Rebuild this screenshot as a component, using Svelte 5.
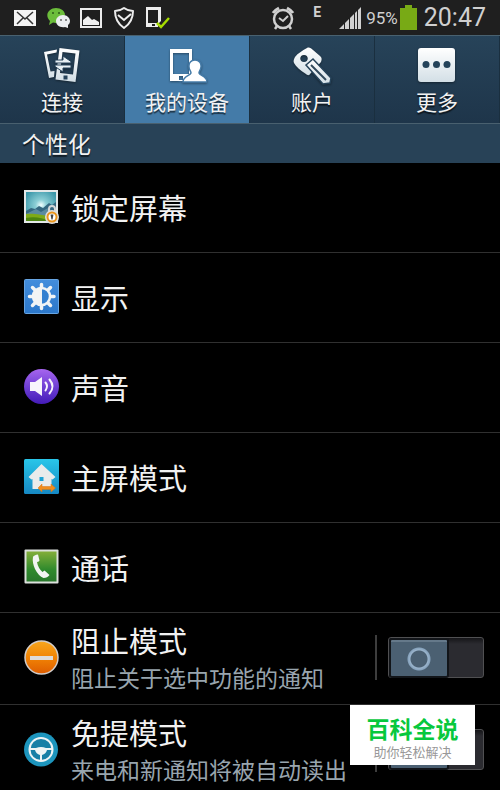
<script lang="ts">
  type Item = {
    id: string;
    title: string;
    note?: string;
  };

  const tabs = [
    { id: "connect", label: "连接" },
    { id: "device", label: "我的设备" },
    { id: "account", label: "账户" },
    { id: "more", label: "更多" },
  ];

  const items: Item[] = [
    { id: "lock", title: "锁定屏幕" },
    { id: "display", title: "显示" },
    { id: "sound", title: "声音" },
    { id: "home", title: "主屏模式" },
    { id: "call", title: "通话" },
    { id: "block", title: "阻止模式", note: "阻止关于选中功能的通知" },
    { id: "handsfree", title: "免提模式", note: "来电和新通知将被自动读出" },
  ];

  let active = $state("device");
  let enabled = $state<Record<string, boolean>>({
    block: false,
    handsfree: false,
  });
</script>

{#snippet tabIcon(id: string)}
  <svg class="tab-icon" viewBox="0 0 40 38" aria-hidden="true">
    <defs>
      <linearGradient id="silver" x1="0" y1="0" x2="0" y2="1">
        <stop offset="0" stop-color="#fff" />
        <stop offset="1" stop-color="#d3dfe6" />
      </linearGradient>
    </defs>
    {#if id === "connect"}
      <path fill="url(#silver)" d="M2 5 15 2.500l-.5 3L5 7.500l3.500 17 4-.5-.5 6-5 1z" />
      <path fill="url(#silver)" fill-rule="evenodd" d="M17.500 1 37.500 3.500 33.500 35 13.500 32.500zM20.500 5 18 26 31 27.500 33.500 6.500z" />
      <path fill="#26435a" d="M21.500 28.500h4v4h-4z" />
      <path fill="#e9f0f3" stroke="#26435a" stroke-width="1" d="M13 13h8V9l8 5.500V16H13zM29 21h-8v4l-8-5.500V18h16z" />
    {:else if id === "device"}
      <path fill="#fff" fill-rule="evenodd" d="M3 2h22v32H3zM6 6v21h16V6zM12 29v4h4v-4z" />
      <path fill="#fff" stroke="#447ba8" stroke-width="1.500" d="M28 13c4 0 6.500 3 6 7-.3 3-2 4-2 6 1 3 8 3 8 9H16c0-6 7-6 8-9 0-2-2-3-2-6-.5-4 2-7 6-7z" />
    {:else if id === "account"}
      <path fill="url(#silver)" fill-rule="evenodd" d="M15 1c2-1 4 0 6 2l7 6c2 2 2 3 1 6L18 27c-1 2-3 1-4 0C8 23 4 20 2 16c-1-2 0-4 1-6 3-4 7-6 12-9zM12 8c-5 0-5 7 0 7s5-7 0-7z" />
      <path fill="url(#silver)" stroke="#26435a" stroke-width="1.500" d="m14 18 7-6 18 19-1 5-7 1z" />
      <path stroke="#31495c" stroke-width="2" fill="none" d="m19 18 15 15" />
    {:else}
      <rect x="1" y="1" width="37" height="34" rx="3" fill="url(#silver)" />
      <g fill="#24435a">
        <circle cx="9" cy="17.500" r="3.500" />
        <circle cx="19.500" cy="17.500" r="3.500" />
        <circle cx="30" cy="17.500" r="3.500" />
      </g>
    {/if}
  </svg>
{/snippet}

{#snippet itemIcon(id: string)}
  <svg class="item-icon" viewBox="0 0 36 36" aria-hidden="true">
    {#if id === "lock"}
      <defs>
        <radialGradient id="sky" cx=".5" cy=".45" r=".6">
          <stop offset="0" stop-color="#f2ffff" />
          <stop offset=".3" stop-color="#8ccfd6" />
          <stop offset="1" stop-color="#3a96a8" />
        </radialGradient>
      </defs>
      <rect x="0" y="1" width="34" height="33" fill="#e4e8e8" />
      <rect x="2" y="3" width="30" height="29" fill="url(#sky)" />
      <path fill="#346780" d="m2 22 5-3 4 1 4-3 4 2 6-5 3 2 4-3v14H2z" />
      <path fill="#5b8ba0" d="m2 25 10-5 5 3 7-4 8 5v4H2z" />
      <path fill="#7eaa18" d="M2 25c8-1 14 1 30 3v4H2z" />
      <path fill="#4c8510" d="M2 29c9-2 15 0 25 3H2z" />
      <path fill="none" stroke="#d4d7d8" stroke-width="2" d="M25 24v-4a3 3 0 0 1 6 0v4" />
      <circle cx="28" cy="28" r="7" fill="#dedede" />
      <circle cx="28" cy="28" r="4.500" fill="#fff" stroke="#eb951c" stroke-width="2" />
      <path fill="#444" d="M26.500 25.500h3l-1 5h-1z" />
    {:else if id === "display"}
      <defs>
        <linearGradient id="blue" x1="0" y1="0" x2="0" y2="1">
          <stop offset="0" stop-color="#438ddc" />
          <stop offset="1" stop-color="#2c78cb" />
        </linearGradient>
      </defs>
      <rect x=".5" y=".5" width="34" height="34" rx="1" fill="url(#blue)" stroke="#67a5e3" />
      <g stroke="#f2f4f5" stroke-width="3.500" stroke-linecap="round">
        <path d="M17.500 5.500v24M5.500 17.500h6M24 17.500h6M8.500 8.500l4 4M22.500 22.500l4 4M26.500 8.500l-4 4M12.500 22.500l-4 4" />
      </g>
      <circle cx="17.500" cy="17.500" r="8.500" fill="#3480d0" stroke="#f2f4f5" stroke-width="2.500" />
      <path fill="#f2f4f5" d="M18 8a9.500 9.500 0 0 0 0 19z" />
    {:else if id === "sound"}
      <defs>
        <linearGradient id="purple" x1="0" y1="0" x2="0" y2="1">
          <stop offset="0" stop-color="#a765ef" />
          <stop offset=".5" stop-color="#7040d4" />
          <stop offset="1" stop-color="#441bb8" />
        </linearGradient>
      </defs>
      <circle cx="17.500" cy="17.500" r="17.500" fill="url(#purple)" />
      <path fill="#f8f5fc" d="M6 13h5l7-5v19l-7-5H6z" />
      <path fill="none" stroke="#f8f5fc" stroke-width="2" stroke-linecap="round" d="M21.500 13.500q3 3.500 0 8M25.500 10.500q6 7 0 14" />
    {:else if id === "home"}
      <defs>
        <linearGradient id="cyan" x1="0" y1="0" x2="0" y2="1">
          <stop offset="0" stop-color="#29c6e9" />
          <stop offset="1" stop-color="#1688c3" />
        </linearGradient>
      </defs>
      <rect width="35" height="35" rx="1.500" fill="url(#cyan)" />
      <path fill="#e9ebeb" fill-rule="evenodd" d="m17.500 5 14 13-3 2.500-1-.5v10h-19V20l-1 .5-3-2.500zM15.500 18v4h4v-4z" />
      <path fill="#f18d1c" stroke="#d47517" stroke-width=".5" d="m14 29 4-4v2.500h9V25l4.500 4-4.500 4v-2.500h-9V33z" />
    {:else if id === "call"}
      <defs>
        <linearGradient id="green" x1="0" y1="0" x2="0" y2="1">
          <stop offset="0" stop-color="#83ae3a" />
          <stop offset=".6" stop-color="#308a2d" />
          <stop offset="1" stop-color="#28772b" />
        </linearGradient>
      </defs>
      <rect x=".5" y=".5" width="34" height="34" rx="1" fill="#dce0dc" />
      <rect x="2.500" y="2.500" width="30" height="30" fill="url(#green)" />
      <path fill="#f3f4f3" d="M9 8q1-2 5-2.500l1.500 6q-1 1.500-2.500 1.500 1 6 5.500 10l2-1.500 5 4.500q-2 3-6 3-5-2-8.500-9Q8 13 9 8z" />
    {:else if id === "block"}
      <defs>
        <linearGradient id="orange" x1="0" y1="0" x2="0" y2="1">
          <stop offset="0" stop-color="#f7a71e" />
          <stop offset=".5" stop-color="#f18405" />
          <stop offset="1" stop-color="#de5c00" />
        </linearGradient>
      </defs>
      <circle cx="17.500" cy="17.500" r="16.500" fill="url(#orange)" stroke="#d2cdca" stroke-width="1.500" />
      <path fill="#dedbd8" d="M6 16h23v4H6z" />
    {:else}
      <circle cx="17" cy="17.500" r="17" fill="#1d95bd" />
      <circle cx="17" cy="17.500" r="11.500" fill="#177fa6" stroke="#eef4f5" stroke-width="2" />
      <path fill="#eef4f5" d="M6 16h6q5-2 10 0h6v2h-5q-1 4-5 5v6h-2v-6q-4-1-5-5H6z" />
    {/if}
  </svg>
{/snippet}

<div class="screen">
  <header class="status">
    <div class="notices">
      <svg width="23" height="24" viewBox="0 0 23 24" aria-label="邮件">
        <path fill="#f4f4f4" d="M0 4h22v16H0z" />
        <path fill="none" stroke="#333" stroke-width="1.500" d="m3 6 8 7 8-7M3 18l6-6M19 18l-6-6" />
      </svg>
      <svg width="23" height="24" viewBox="0 0 23 24" aria-label="微信">
        <path fill="#6cbd3b" d="M9 2c5 0 9 3 9 7s-4 8-9 8l-3-.5L2 19l1-4C-3 9 2 2 9 2z" />
        <circle cx="6" cy="7" r="1" fill="#2d5b19" />
        <circle cx="12" cy="7" r="1" fill="#2d5b19" />
        <path fill="#eceef0" d="M16 9c4 0 7 3 7 6 0 2-1 3-2 4v3l-3-1c-5 1-9-2-9-6 0-3 3-6 7-6z" />
        <circle cx="14" cy="14" r="1" fill="#666" />
        <circle cx="19" cy="14" r="1" fill="#666" />
      </svg>
      <svg width="23" height="24" viewBox="0 0 23 24" aria-label="图片">
        <path fill="none" stroke="#ececec" stroke-width="2" d="M1 3h20v18H1z" />
        <path fill="#f0f0f0" d="M3 19v-5l5-4 4 4 2-1 5 3v3z" />
      </svg>
      <svg width="23" height="24" viewBox="0 0 23 24" aria-label="安全">
        <path fill="none" stroke="#ededed" stroke-width="2" stroke-linejoin="round" d="M2 5q5 0 9-3 4 3 9 3 0 11-9 17Q2 16 2 5z" />
        <path fill="none" stroke="#ededed" stroke-width="2" d="m5 9 6 5 7-6" />
      </svg>
      <svg width="24" height="24" viewBox="0 0 24 24" aria-label="手机已连接">
        <path fill="#ededed" fill-rule="evenodd" d="M0 1h15v14l-3 3v3H0zM2 4v13h10V4zM6 18v2h3v-2z" />
        <path fill="none" stroke="#a6dc00" stroke-width="2.500" d="m11 17 4 4 8-9" />
      </svg>
    </div>
    <div class="system">
      <svg width="24" height="24" viewBox="0 0 24 24" aria-label="闹钟">
        <g fill="none" stroke="#d0d0d0">
          <circle cx="12" cy="13" r="9" stroke-width="2.500" />
          <path stroke-width="2" d="m8 12 4 3 5-5" />
          <path stroke-width="3" d="M2 7q2-3 6-5M22 7q-2-3-6-5" />
          <path stroke-width="2.500" d="m6 20-2 3M18 20l2 3" />
        </g>
      </svg>
      <span class="network">E</span>
      <svg width="23" height="24" viewBox="0 0 23 24" aria-label="信号">
        <path fill="#d0d0d0" d="m0 23 5-5v5zM6 17l4-4v10H6zM11 12l4-4v15h-4zM16 7l2-2v18h-2zM19 4l3-3v22h-3z" />
      </svg>
      <span class="percent">95%</span>
      <svg class="battery" width="17" height="26" viewBox="0 0 17 26" aria-label="电池">
        <path fill="#78aa15" d="M5 0h7v3h5v22H0V3h5z" />
      </svg>
      <time>20:47</time>
    </div>
  </header>

  <nav class="tabs">
    {#each tabs as tab}
      <button class:active={active === tab.id} onclick={() => (active = tab.id)}>
        {@render tabIcon(tab.id)}
        <span>{tab.label}</span>
      </button>
    {/each}
  </nav>

  <h2>个性化</h2>

  <ul class="settings">
    {#each items as item}
      <li>
        {#if item.note}
          <div class="row tall">
            {@render itemIcon(item.id)}
            <label class="text" for={item.id}>
              <span class="title">{item.title}</span>
              <span class="note">{item.note}</span>
            </label>
            <span class="divider"></span>
            <input
              id={item.id}
              class="switch"
              type="checkbox"
              role="switch"
              bind:checked={enabled[item.id]}
            />
          </div>
        {:else}
          <button class="row">
            {@render itemIcon(item.id)}
            <span class="title">{item.title}</span>
          </button>
        {/if}
      </li>
    {/each}
  </ul>

  <aside class="brand">
    <strong>百科全说</strong>
    <span>助你轻松解决</span>
  </aside>
</div>

<style>
  :global(body) {
    background: #000;
  }

  .screen {
    position: relative;
    display: flex;
    flex-direction: column;
    height: 100vh;
    overflow: hidden;
    background: #000;
    color: #f2f2f2;
    font-family: "Noto Sans CJK SC", sans-serif;
  }

  .screen * {
    box-sizing: border-box;
  }

  button {
    margin: 0;
    border: 0;
    color: inherit;
    font-family: inherit;
    cursor: pointer;
  }

  /* Status bar */
  .status {
    display: flex;
    flex: none;
    justify-content: space-between;
    align-items: center;
    height: 35px;
    padding: 0 14px;
    background: #1f1f1f;
    color: #d0d0d0;
    font-family: Roboto, sans-serif;
  }

  .notices,
  .system {
    display: flex;
    align-items: center;
  }

  .notices {
    gap: 10px;
  }

  .network {
    align-self: flex-start;
    margin: 0 18px;
    font-size: 14px;
    line-height: 18px;
    font-weight: 700;
  }

  .percent {
    margin: 0 2px 0 4px;
    font-size: 17px;
  }

  .battery {
    margin-right: 7px;
  }

  time {
    font-size: 25px;
  }

  /* Tabs */
  .tabs {
    display: grid;
    flex: none;
    grid-template-columns: repeat(4, 1fr);
    border-top: 1px solid #49616f;
    border-bottom: 1px solid #49606f;
  }

  .tabs button {
    display: flex;
    flex-direction: column;
    align-items: center;
    height: 87px;
    padding: 11px 0 0;
    border-right: 1px solid #1a2f3f;
    background: linear-gradient(#274359, #1e354a);
    font-size: 21px;
    line-height: 32px;
    text-shadow: 0 2px 1px rgba(0, 0, 0, 0.6);
  }

  .tabs .active {
    background: #447ba8;
  }

  .tab-icon {
    width: 40px;
    height: 38px;
    filter: drop-shadow(0 1px 1px rgba(0, 0, 0, 0.4));
  }

  h2 {
    flex: none;
    margin: 0;
    padding: 0 22px;
    background: #284257;
    font-size: 23px;
    line-height: 39px;
    font-weight: 400;
    text-shadow: 0 2px 1px rgba(0, 0, 0, 0.6);
  }

  /* List */
  .settings {
    flex: 1;
    min-height: 0;
    margin: 0;
    padding: 0;
    overflow-y: auto;
    scrollbar-width: none;
    list-style: none;
  }

  li {
    border-bottom: 1px solid #303030;
  }

  .row {
    display: flex;
    align-items: center;
    gap: 11px;
    width: 100%;
    height: 89px;
    padding: 0 16px 2px 24px;
    background: none;
    text-align: left;
  }

  .tall {
    height: 91px;
  }

  .item-icon {
    flex: none;
    width: 36px;
    height: 36px;
  }

  .text {
    display: flex;
    flex: 1;
    flex-direction: column;
    min-width: 0;
    white-space: nowrap;
  }

  .title {
    font-size: 29px;
    line-height: 38px;
  }

  .note {
    color: #98a5ae;
    font-size: 23px;
    line-height: 36px;
  }

  .divider {
    flex: none;
    width: 2px;
    height: 45px;
    background: #3d3d3d;
  }

  .switch {
    flex: none;
    width: 96px;
    height: 41px;
    margin: 0;
    padding: 2px;
    border: 1px solid #505052;
    border-radius: 3px;
    background: linear-gradient(#151518, #2b2b30 6px);
    appearance: none;
    cursor: pointer;
  }

  .switch::before {
    content: "";
    display: block;
    width: 56px;
    height: 34px;
    border-top: 2px solid #65798a;
    border-radius: 1px;
    background: radial-gradient(
      circle at center,
      #4b6072 8px,
      #9ab4cc 9px,
      #87a3bd 11px,
      #4b6072 12px
    );
    box-shadow: 0 0 0 2px #121519;
  }

  .switch:checked::before {
    margin-left: auto;
  }

  .brand {
    position: absolute;
    right: 25px;
    bottom: 25px;
    display: flex;
    flex-direction: column;
    align-items: center;
    width: 125px;
    height: 60px;
    padding-top: 10px;
    background: #fff;
    font-family: "Liberation Sans", "Noto Sans CJK SC", sans-serif;
  }

  .brand strong {
    color: #07c83d;
    font-size: 23px;
    line-height: 30px;
    font-weight: 700;
  }

  .brand span {
    color: #999;
    font-size: 13px;
    line-height: 15px;
  }
</style>
